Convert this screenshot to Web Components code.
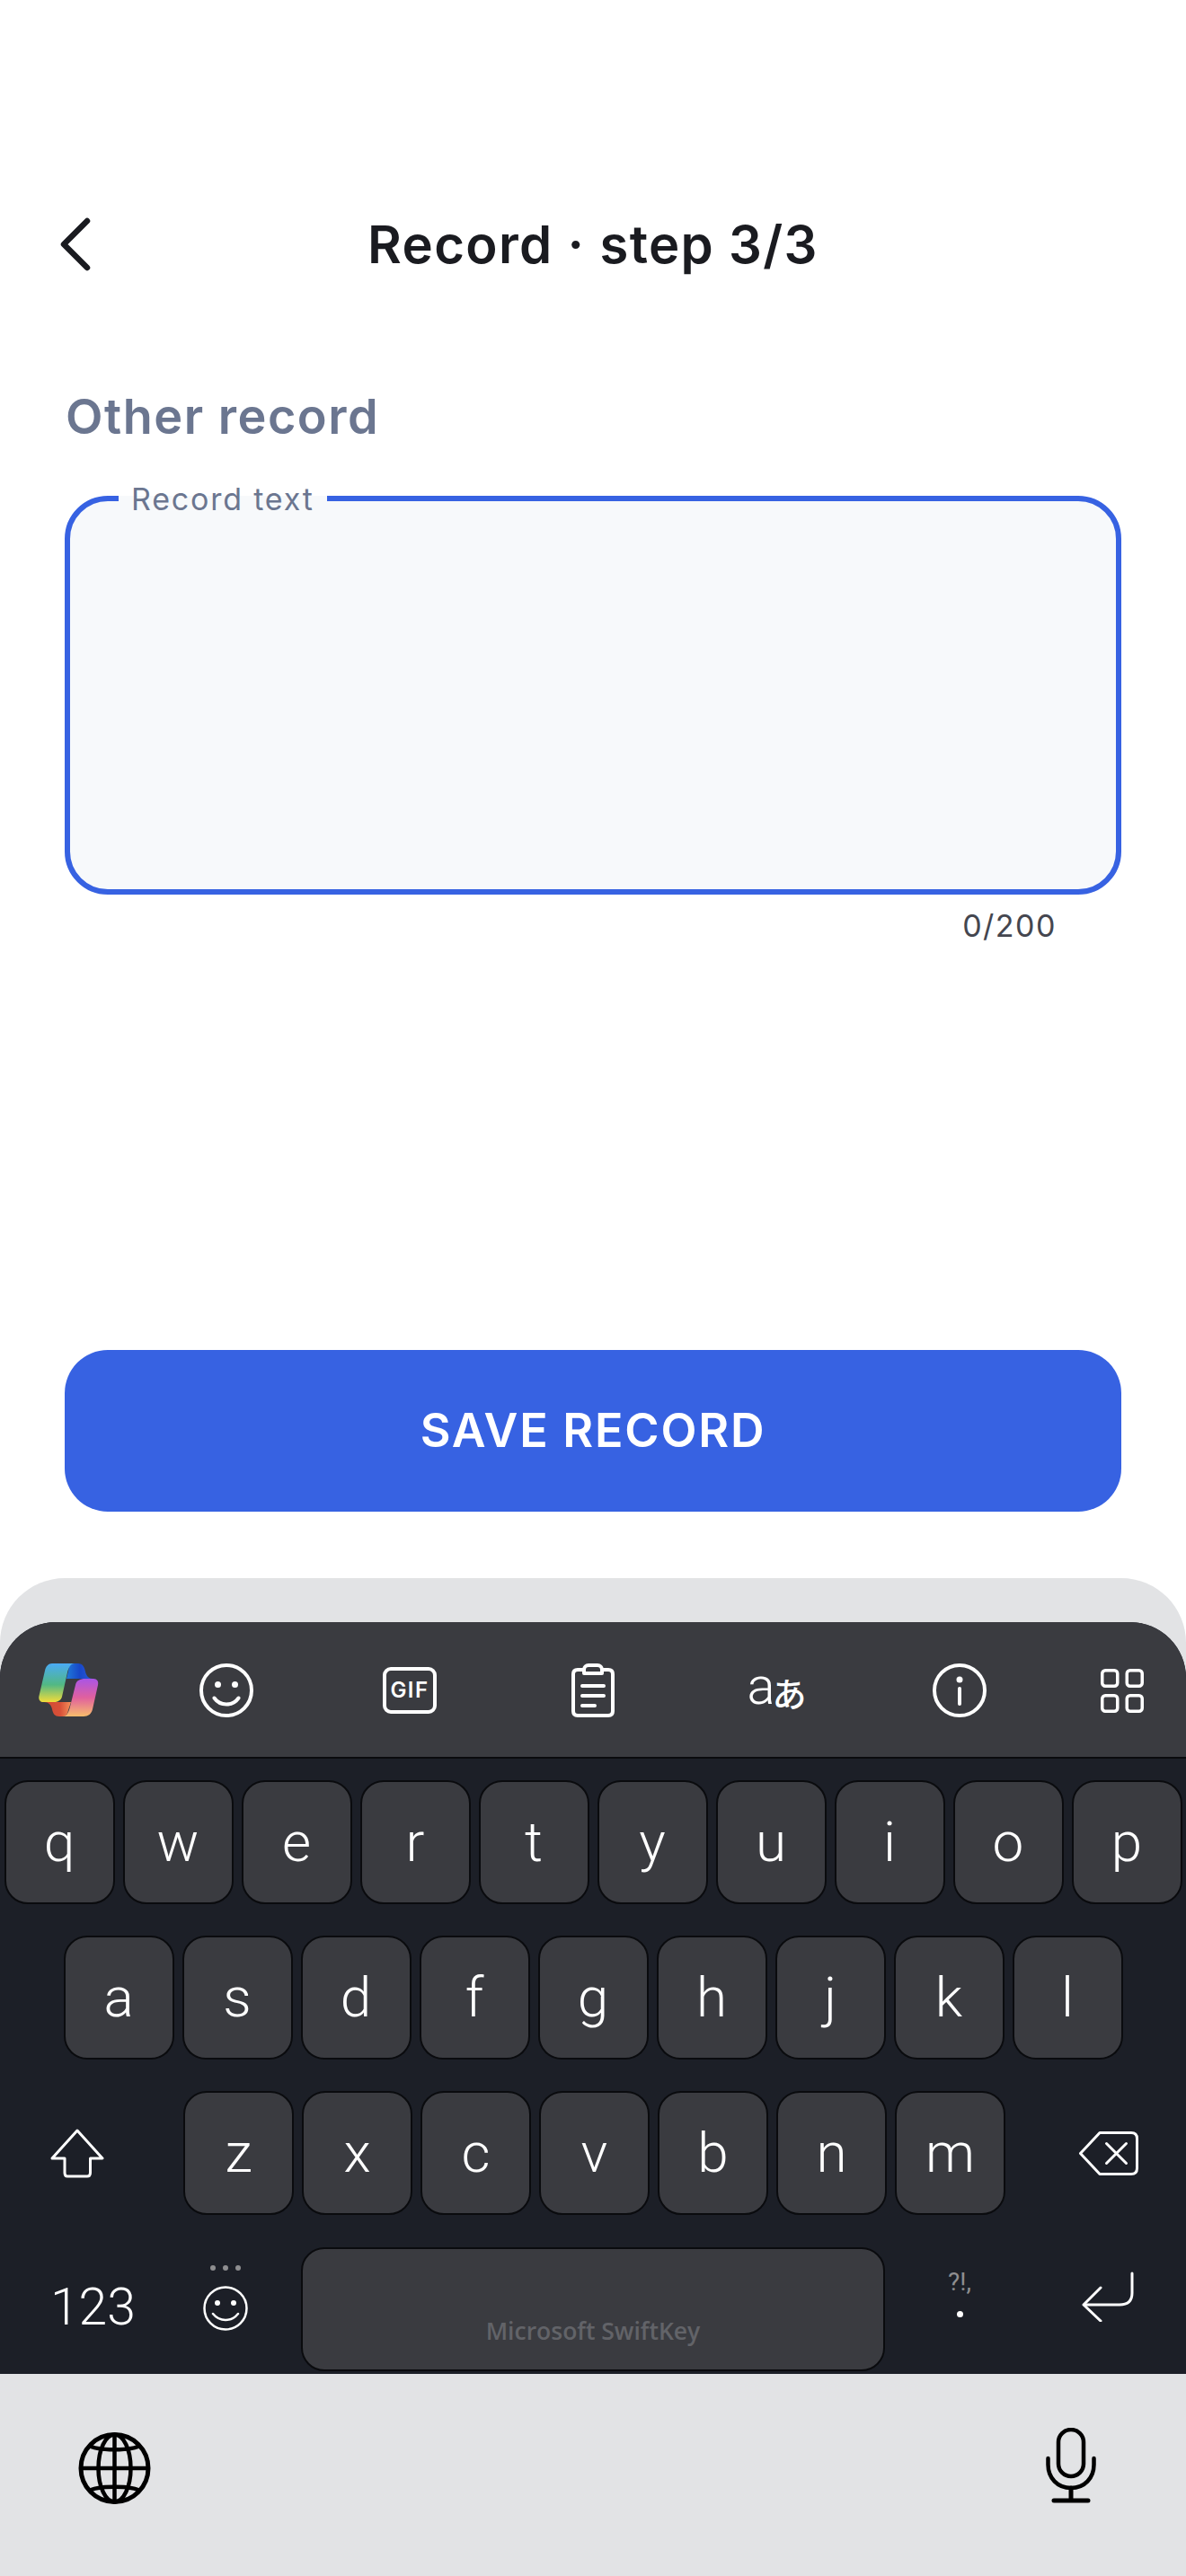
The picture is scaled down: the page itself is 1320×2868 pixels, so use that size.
<!DOCTYPE html>
<html lang="en">
<head>
<meta charset="utf-8">
<title>Record step 3/3</title>
<style>
  html, body { margin: 0; padding: 0; background: #fff; }
  body { font-family: Inter, "Noto Sans", sans-serif; }
</style>
</head>
<body>

<record-page>
  <record-header>Record · step 3/3</record-header>
  <section-label>Other record</section-label>
  <record-field label="Record text" counter="0/200"></record-field>
  <primary-button>SAVE RECORD</primary-button>
  <swift-keyboard slot="keyboard"></swift-keyboard>
</record-page>

<script>
// small helper, every component just writes its own shadow root
function shadow(el, html) {
  el.attachShadow({ mode: "open" });
  el.shadowRoot.innerHTML = html;
}

class RecordPage extends HTMLElement {
  constructor() {
    super();
    shadow(this, `
      <style>
        :host { display: flex; flex-direction: column; height: 2868px; }
        main { flex: 1; display: flex; flex-direction: column; padding-top: 212px; }
      </style>
      <main><slot></slot></main>
      <slot name="keyboard"></slot>
    `);
  }
}

class RecordHeader extends HTMLElement {
  constructor() {
    super();
    shadow(this, `
      <style>
        :host {
          display: grid;
          grid-template-columns: 1fr auto 1fr;
          align-items: center;
          height: 120px;
          padding: 0 0 0 66px;
          margin-right: 66px;
        }
        svg { display: block; }
        h1 {
          margin: 0;
          font: 600 58px/120px Inter, sans-serif;
          letter-spacing: 1.350px;
          color: #1a1b20;
        }
      </style>
      <svg width="36" height="60" viewBox="0 0 36 60" fill="none" stroke="#1a1b20" stroke-width="6.5" stroke-linecap="round" stroke-linejoin="round">
        <path d="M31 4 L5 30 L31 56"/>
      </svg>
      <h1><slot></slot></h1>
      <span></span>
    `);
  }
}

class SectionLabel extends HTMLElement {
  constructor() {
    super();
    shadow(this, `
      <style>
        :host {
          display: block;
          margin: 102px 73px 0;
          font: 600 54px/60px Inter, sans-serif;
          letter-spacing: 1.500px;
          color: #6b7690;
        }
      </style>
      <slot></slot>
    `);
  }
}

class RecordField extends HTMLElement {
  constructor() {
    super();
    const label = this.getAttribute("label");
    const counter = this.getAttribute("counter");
    shadow(this, `
      <style>
        :host { display: block; margin: 58px 72px 0; }
        .box {
          position: relative;
          height: 444px;
          box-sizing: border-box;
          border: 6px solid #3762e2;
          border-radius: 48px;
          background: #f7f9fb;
        }
        .label {
          position: absolute;
          left: 54px;
          top: -21px;
          padding: 0 14px;
          font: 400 34px/38px Inter, sans-serif;
          letter-spacing: 1.800px;
          color: #6b7690;
          background: linear-gradient(#fff 0 15px, #f7f9fb 15px);
        }
        .counter {
          height: 40px;
          margin-top: 15px;
          padding-right: 72px;
          text-align: right;
          font: 400 34px/40px Inter, sans-serif;
          letter-spacing: 1.500px;
          color: #44464f;
        }
      </style>
      <div class="box"><span class="label">${label}</span></div>
      <div class="counter">${counter}</div>
    `);
  }
}

class PrimaryButton extends HTMLElement {
  constructor() {
    super();
    shadow(this, `
      <style>
        :host { display: block; margin: auto 72px 74px; }
        button {
          display: block;
          width: 100%;
          height: 180px;
          border: 0;
          border-radius: 48px;
          background: #3762e2;
          color: #fff;
          font: 600 52px/1 Inter, sans-serif;
          letter-spacing: 1.800px;
        }
      </style>
      <button><slot></slot></button>
    `);
  }
}

class KbKey extends HTMLElement {
  constructor() {
    super();
    shadow(this, `
      <style>
        :host {
          display: flex;
          align-items: center;
          justify-content: center;
          box-sizing: border-box;
          width: 123px;
          height: 138px;
          margin: -1px 0;
          background: #3a3b40;
          border: 2px solid #0a0b0e;
          border-radius: 26px;
          color: #fff;
          font: 300 62px/1 Roboto, sans-serif;
        }
      </style>
      <slot></slot>
    `);
  }
}

class KbRow extends HTMLElement {
  constructor() {
    super();
    shadow(this, `
      <style>
        :host { display: flex; justify-content: center; gap: 9px; }
      </style>
      <slot></slot>
    `);
  }
}

class KeyboardToolbar extends HTMLElement {
  constructor() {
    super();
    shadow(this, `
      <style>
        :host {
          display: grid;
          grid-template-columns: 150px repeat(5, 204px) 150px;
          align-items: center;
          justify-items: center;
          box-sizing: border-box;
          height: 152px;
          padding-top: 2px;
          background: #3a3b40;
          border-bottom: 2px solid #0a0b0e;
          border-radius: 62px 62px 0 0;
        }
        svg { display: block; }
        .copilot { margin-left: 3px; }
        .gif {
          box-sizing: border-box;
          width: 60px;
          height: 52px;
          border: 4px solid #fff;
          border-radius: 9px;
          color: #fff;
          font: 600 24px/44px Inter, sans-serif;
          letter-spacing: 1.500px;
          text-align: center;
        }
        .lang {
          display: flex;
          align-items: flex-end;
          color: #fff;
          height: 46px;
          width: 63px;
          position: relative;
          font-family: Roboto, "Noto Sans CJK JP", sans-serif;
        }
        .lang b { font-weight: 300; font-size: 58px; line-height: 36px; position: absolute; left: -1px; top: 0; }
        .lang i { font-style: normal; font-weight: 500; font-size: 38px; line-height: 38px; position: absolute; right: -2px; bottom: -1px; }
        .apps { margin-left: 7px; }
      </style>
      <svg class="copilot" width="67" height="60" viewBox="0 0 67 60">
        <defs>
          <linearGradient id="l" x1="0" y1="0" x2="0" y2="1">
            <stop offset="0" stop-color="#4aaaf5"/><stop offset=".55" stop-color="#52b884"/><stop offset="1" stop-color="#f2dc3a"/>
          </linearGradient>
          <linearGradient id="b" x1="0" y1="0" x2="1" y2="0">
            <stop offset="0" stop-color="#1f78d8"/><stop offset=".5" stop-color="#1848c8"/><stop offset="1" stop-color="#2a58d8"/>
          </linearGradient>
          <linearGradient id="r" x1="0" y1="0" x2="0" y2="1">
            <stop offset="0" stop-color="#a955e6"/><stop offset=".5" stop-color="#e0609e"/><stop offset="1" stop-color="#f9bd6c"/>
          </linearGradient>
          <linearGradient id="o" x1="0" y1="0" x2="1" y2="0">
            <stop offset="0" stop-color="#cf4a34"/><stop offset=".6" stop-color="#d85038"/><stop offset="1" stop-color="#f5905a"/>
          </linearGradient>
        </defs>
        <path fill="url(#b)" d="M38 0H44C49 0 51 4 52 9C53 14 56 17 60 17H31L33 9C34 3 35 0 38 0Z"/>
        <path fill="url(#o)" d="M6 43H36L33 52C32 57 30 59 27 59H23C18 59 16 56 15 51C14 46 11 43 6 43Z"/>
        <path fill="url(#l)" d="M15 0H40C36 0 33.500 4 32 10L26 37C25 41 21 43 17 43H5C1.500 43 -.5 40 .5 36L7 8C8 3 11 0 15 0Z"/>
        <path fill="url(#r)" d="M52 17H61C65 17 67 20 66 24L60 51C59 56 55 59 50 59H27C31 59 33 55 34.500 50L41 24C42 19 46 17 52 17Z"/>
      </svg>
      <svg width="60" height="60" viewBox="0 0 60 60" fill="none" stroke="#fff" stroke-width="4" stroke-linecap="round">
        <circle cx="30" cy="30" r="28"/>
        <circle cx="20.500" cy="23.500" r="3.500" fill="#fff" stroke="none"/>
        <circle cx="39.500" cy="23.500" r="3.500" fill="#fff" stroke="none"/>
        <path d="M16.500 38.500C20 43.500 24.500 45.500 30 45.500C35.500 45.500 40 43.500 43.500 38.500"/>
      </svg>
      <div class="gif">GIF</div>
      <svg width="48" height="60" viewBox="0 0 48 60" fill="none" stroke="#fff" stroke-width="4" stroke-linecap="round" stroke-linejoin="round">
        <path d="M14 7H7Q2 7 2 12V53Q2 58 7 58H41Q46 58 46 53V12Q46 7 41 7H34"/>
        <path d="M14 11H34V7A5 5 0 0 0 29 2H19A5 5 0 0 0 14 7Z"/>
        <path d="M12 25H36M12 36H36M12 47H26"/>
      </svg>
      <div class="lang"><b>a</b><i>あ</i></div>
      <svg width="60" height="60" viewBox="0 0 60 60" fill="none" stroke="#fff" stroke-width="4" stroke-linecap="round">
        <circle cx="30" cy="30" r="28"/>
        <circle cx="30" cy="18" r="3.500" fill="#fff" stroke="none"/>
        <path d="M30 28V45"/>
      </svg>
      <svg class="apps" width="48" height="49" viewBox="0 0 48 49" fill="none" stroke="#fff" stroke-width="3.500">
        <rect x="1.750" y="1.750" width="17" height="17.500" rx="3.500"/>
        <rect x="29.250" y="1.750" width="17" height="17.500" rx="3.500"/>
        <rect x="1.750" y="29.750" width="17" height="17.500" rx="3.500"/>
        <rect x="29.250" y="29.750" width="17" height="17.500" rx="3.500"/>
      </svg>
    `);
  }
}

class KeyboardFooter extends HTMLElement {
  constructor() {
    super();
    shadow(this, `
      <style>
        :host {
          display: flex;
          justify-content: space-between;
          height: 225px;
          padding: 60px 100px 0 87px;
          box-sizing: border-box;
        }
        svg { display: block; }
        .globe { margin-top: 5px; }
      </style>
      <svg class="globe" width="81" height="80" viewBox="0 0 81 80" fill="none" stroke="#000" stroke-width="4.500">
        <ellipse cx="40.500" cy="40" rx="37.500" ry="37.500" stroke-width="5"/>
        <ellipse cx="40.500" cy="40" rx="18" ry="37.500"/>
        <path d="M40.500 2V78M3 40H78"/>
        <path d="M11 14C20 21 61 21 70 14M11 66C20 59 61 59 70 66"/>
      </svg>
      <svg width="56" height="84" viewBox="0 0 56 84" fill="none" stroke="#000" stroke-width="4.500" stroke-linecap="round">
        <rect x="14" y="2" width="28" height="52" rx="14"/>
        <path d="M2.500 34V41C2.500 56 13 67 28 67C43 67 53.500 56 53.500 41V34"/>
        <path d="M28 67V81M9 81H47" stroke-width="5"/>
      </svg>
    `);
  }
}

class SwiftKeyboard extends HTMLElement {
  constructor() {
    super();
    const row = (s) => [...s].map((c) => `<kb-key>${c}</kb-key>`).join("");
    shadow(this, `
      <style>
        :host {
          display: block;
          height: 1111px;
          padding-top: 49px;
          box-sizing: border-box;
          background: #e2e3e5;
          border-radius: 72px 72px 0 0;
        }
        .frame {
          display: flex;
          flex-direction: column;
          height: 837px;
          background: #1c1f27;
          border-radius: 62px 62px 0 0;
        }
        .rows { display: flex; flex-direction: column; gap: 37px; padding-top: 25px; }
        .side { flex: 1; display: flex; align-items: center; }
        .shift { padding-left: 56px; }
        .del { justify-content: flex-end; padding-right: 53px; }
        svg { display: block; }
        .bottom { display: grid; grid-template-columns: 335px 650px 1fr; height: 138px; }
        .left { display: flex; }
        .num { width: 225px; padding-left: 56px; box-sizing: border-box; color: #fff; font: 300 57px/133px Roboto, sans-serif; }
        .emoji { display: flex; flex-direction: column; padding-top: 20px; }
        .dots { display: flex; gap: 8px; padding: 0 0 17px 9px; }
        .dots span { width: 6px; height: 6px; border-radius: 50%; background: #8e8e90; }
        .space {
          display: flex;
          align-items: flex-end;
          justify-content: center;
          box-sizing: border-box;
          background: #3a3b40;
          border: 2px solid #0a0b0e;
          border-radius: 26px;
          height: 138px;
          padding-bottom: 27px;
          font: 600 26.500px/32px "Open Sans", sans-serif;
          color: #626368;
        }
        .right { display: flex; padding: 23px 58px 0 67px; justify-content: space-between; }
        .punct { display: flex; flex-direction: column; align-items: center; width: 32px; color: #8e8e90; font: 400 28px/32px Roboto, sans-serif; white-space: nowrap; }
        .punct i { display: block; width: 7px; height: 7px; margin-top: 16px; margin-right: 0; border-radius: 50%; background: #fff; }
        .enter { margin-top: 4px; }
      </style>
      <div class="frame">
        <keyboard-toolbar></keyboard-toolbar>
        <div class="rows">
          <kb-row>${row("qwertyuiop")}</kb-row>
          <kb-row>${row("asdfghjkl")}</kb-row>
          <kb-row>
            <div class="side shift">
              <svg width="60" height="55" viewBox="0 0 60 55" fill="none" stroke="#fff" stroke-width="3" stroke-linejoin="round">
                <path d="M30 2L58 33H44.500V49Q44.500 53 41 53H19Q16 53 16 49V33H2Z"/>
              </svg>
            </div>
            ${row("zxcvbnm")}
            <div class="side del">
              <svg width="66" height="49" viewBox="0 0 66 49" fill="none" stroke="#fff" stroke-width="3" stroke-linejoin="round" stroke-linecap="round">
                <path d="M23 1.500H58Q64.500 1.500 64.500 8V41Q64.500 47.500 58 47.500H23L1.500 24.500Z"/>
                <path d="M30.500 13.500L52.500 35.500M52.500 13.500L30.500 35.500"/>
              </svg>
            </div>
          </kb-row>
          <div class="bottom">
            <div class="left">
              <div class="num">123</div>
              <div class="emoji">
                <div class="dots"><span></span><span></span><span></span></div>
                <svg width="52" height="50" viewBox="0 0 52 50" fill="none" stroke="#fff" stroke-width="2.500" stroke-linecap="round">
                  <circle cx="26" cy="25" r="23.500"/>
                  <circle cx="17" cy="19" r="3" fill="#fff" stroke="none"/>
                  <circle cx="35" cy="19" r="3" fill="#fff" stroke="none"/>
                  <path d="M12 31C16 36 21 38 26 38C31 38 36 36 40 31"/>
                </svg>
              </div>
            </div>
            <div class="space">Microsoft SwiftKey</div>
            <div class="right">
              <div class="punct">?!,<i></i></div>
              <svg class="enter" width="58" height="56" viewBox="0 0 58 56" fill="none" stroke="#fff" stroke-width="3" stroke-linecap="round" stroke-linejoin="round">
                <path d="M56 2V24Q56 37 42 37H3"/>
                <path d="M21 18L2 37L21 55"/>
              </svg>
            </div>
          </div>
        </div>
      </div>
      <keyboard-footer></keyboard-footer>
    `);
  }
}

customElements.define("record-page", RecordPage);
customElements.define("record-header", RecordHeader);
customElements.define("section-label", SectionLabel);
customElements.define("record-field", RecordField);
customElements.define("primary-button", PrimaryButton);
customElements.define("kb-key", KbKey);
customElements.define("kb-row", KbRow);
customElements.define("keyboard-toolbar", KeyboardToolbar);
customElements.define("keyboard-footer", KeyboardFooter);
customElements.define("swift-keyboard", SwiftKeyboard);
</script>
</body>
</html>
